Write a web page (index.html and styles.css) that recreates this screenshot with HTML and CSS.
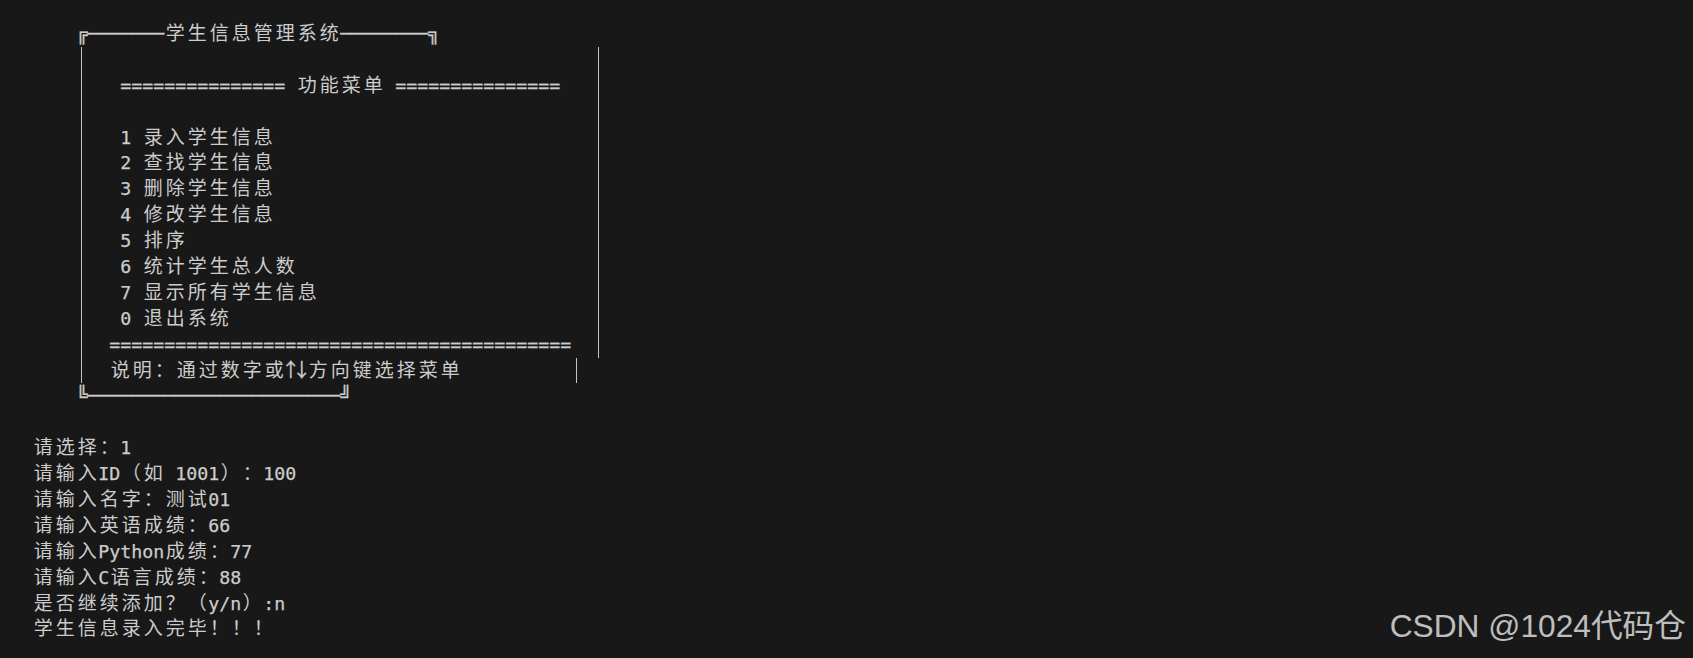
FILE: index.html
```html
<!DOCTYPE html>
<html lang="zh-CN">
<head>
<meta charset="utf-8">
<title>学生信息管理系统</title>
<link rel="stylesheet" href="styles.css">
</head>
<body>
<main class="console">
<div class="ln">    ╔───────<span class="w">学生信息管理系统</span>────────╗</div>
<div class="box">
  <div class="frame">
    <div class="ln"></div>
    <div class="ln"> =============== <span class="w">功能菜单</span> ===============</div>
    <div class="ln"></div>
    <div class="ln"> 1 <span class="w">录入学生信息</span></div>
    <div class="ln"> 2 <span class="w">查找学生信息</span></div>
    <div class="ln"> 3 <span class="w">删除学生信息</span></div>
    <div class="ln"> 4 <span class="w">修改学生信息</span></div>
    <div class="ln"> 5 <span class="w">排序</span></div>
    <div class="ln"> 6 <span class="w">统计学生总人数</span></div>
    <div class="ln"> 7 <span class="w">显示所有学生信息</span></div>
    <div class="ln"> 0 <span class="w">退出系统</span></div>
    <div class="ln">==========================================</div>
  </div>
  <div class="note">
    <div class="ln"><span class="w">说明：通过数字</span><span class="w k">或</span><span class="arr">↑↓</span><span class="w">方向键选择菜单</span></div>
  </div>
</div>
<div class="ln">    ╚───────────────────────╝</div>
<div class="ln"></div>
<div class="ln"><span class="w">请选择：</span>1</div>
<div class="ln"><span class="w">请输入</span>ID<span class="w">（如</span> 1001<span class="w">）：</span>100</div>
<div class="ln"><span class="w">请输入名字：测试</span>01</div>
<div class="ln"><span class="w">请输入英语成绩：</span>66</div>
<div class="ln"><span class="w">请输入</span>Python<span class="w">成绩：</span>77</div>
<div class="ln"><span class="w">请输入</span>C<span class="w">语言成绩：</span>88</div>
<div class="ln"><span class="w">是否继续添加？（</span>y/n<span class="w">）</span>:n</div>
<div class="ln"><span class="w">学生信息录入完毕！！！</span></div>
</main>
<div class="watermark">CSDN @1024代码仓</div>
</body>
</html>
```

FILE: styles.css
```css
html, body {
  margin: 0;
  padding: 0;
  background: #181818;
}

body {
  width: 1693px;
  height: 658px;
  overflow: hidden;
  position: relative;
}

.console {
  padding: 21px 0 0 32.3px;
  color: #cccccc;
  font-family: "DejaVu Sans Mono", "Noto Sans CJK SC", monospace;
  font-size: 18.27px;
  -webkit-text-stroke: 0.25px #cccccc;
}

.ln {
  height: 25.9px;
  line-height: 26.4px;
  white-space: pre;
}

.w {
  font-family: "Noto Sans CJK SC", sans-serif;
  font-size: 19px;
  line-height: 1;
  letter-spacing: 3px;
  padding-left: 1.5px;
  margin-right: -1.5px;
  text-spacing-trim: space-all;
  font-kerning: none;
  -webkit-text-stroke: 0;
}

.w.k {
  letter-spacing: -2.5px;
  margin-right: 0;
}

.arr {
  font-family: "Noto Sans CJK SC", sans-serif;
  font-size: 19px;
  line-height: 1;
  letter-spacing: -8px;
  margin-right: 4px;
  -webkit-text-stroke: 0.3px #cccccc;
}

.box {
  margin-left: 49.2px;
  border-left: 1px solid #c4c4c4;
}

.frame {
  box-sizing: border-box;
  width: 516.8px;
  padding-left: 26.8px;
  border-right: 1px solid #c4c4c4;
}

.note {
  box-sizing: border-box;
  width: 494.8px;
  padding-left: 26.8px;
  border-right: 1px solid #c4c4c4;
}

.watermark {
  position: absolute;
  right: 7px;
  bottom: 12px;
  font-family: "Liberation Sans", "Noto Sans CJK SC", sans-serif;
  font-size: 31.7px;
  color: rgba(255, 255, 255, 0.72);
  white-space: nowrap;
}
```
